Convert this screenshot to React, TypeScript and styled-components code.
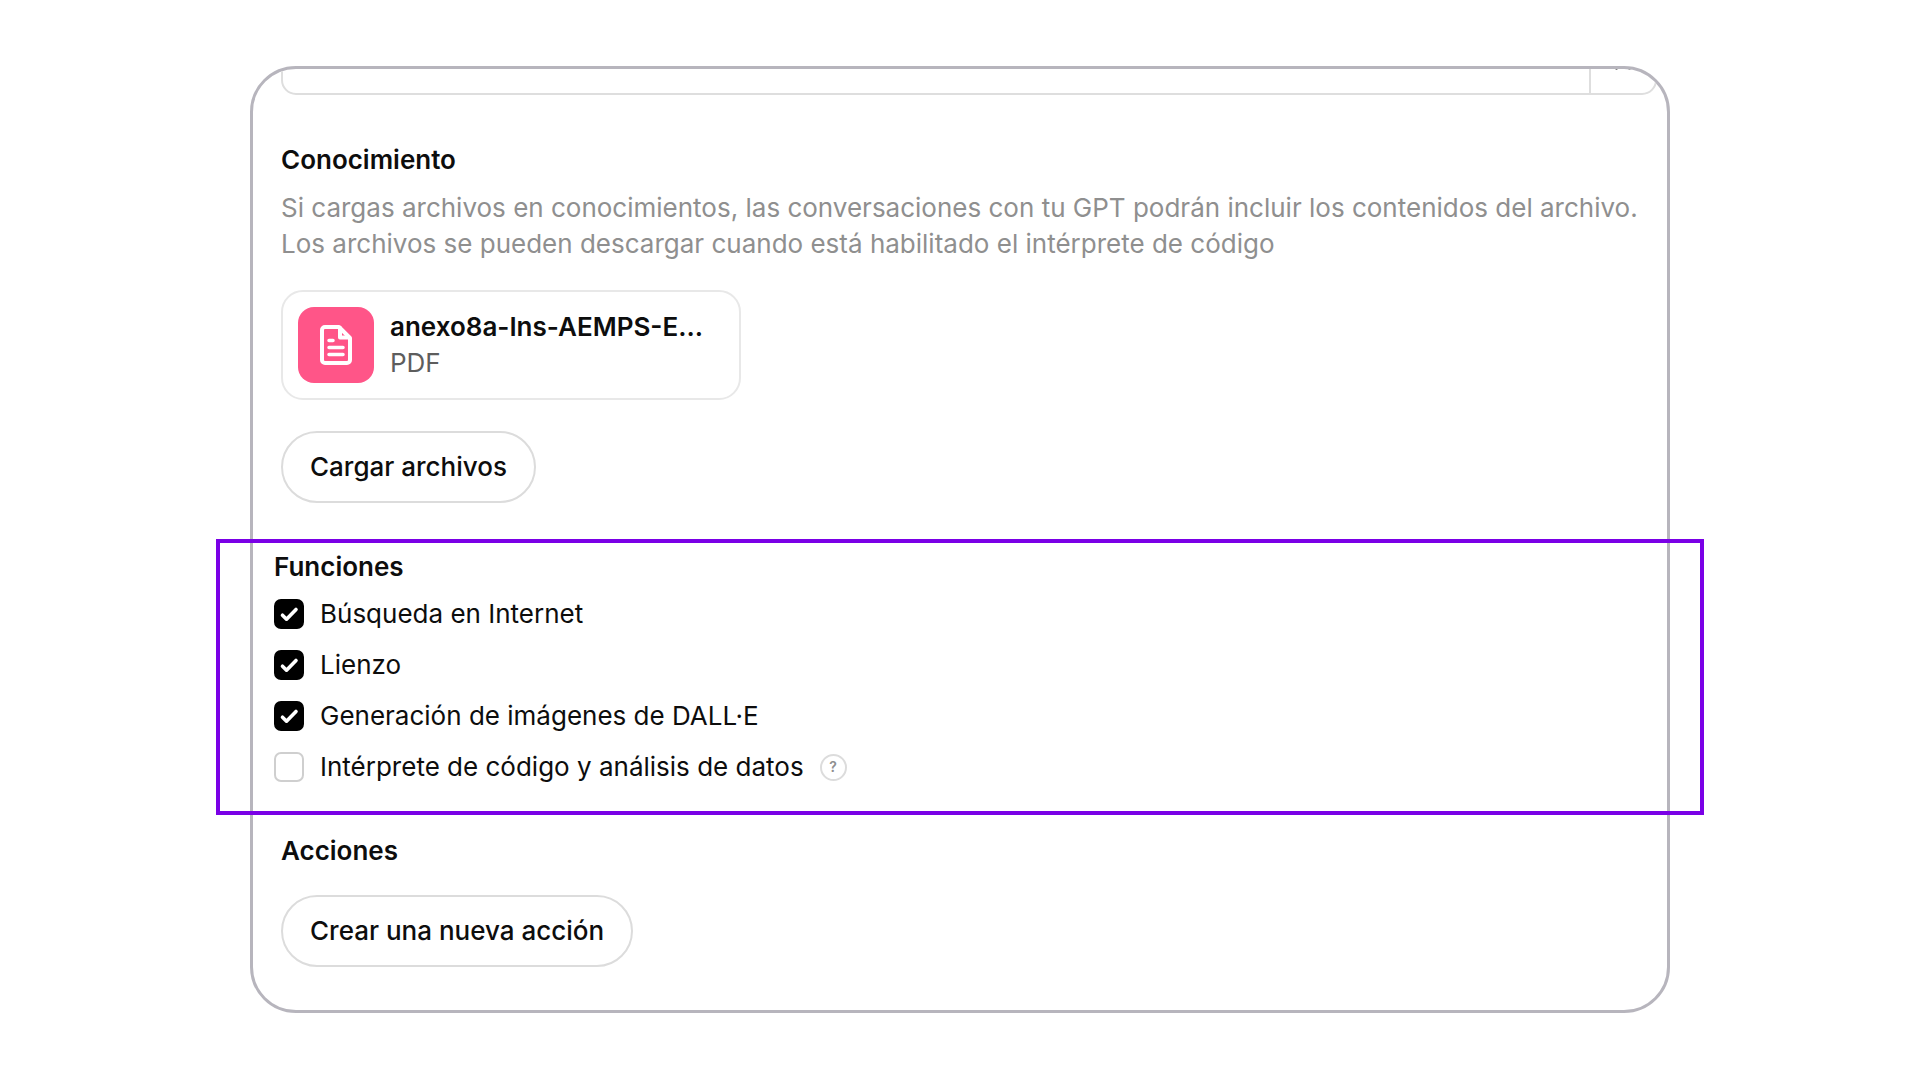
import React, { useState } from "react";
import styled, { createGlobalStyle } from "styled-components";

const GlobalStyle = createGlobalStyle`
  *, *::before, *::after { box-sizing: border-box; }
  body {
    margin: 0;
    background: #fff;
    color: #0d0d0d;
    font-family: Inter, "Liberation Sans", sans-serif;
    font-size: 26px;
    line-height: 36px;
  }
  h2, p { margin: 0; }
  button, input { font: inherit; color: inherit; }
`;

const Page = styled.div`
  padding: 66px 40px;
`;

const Panel = styled.main`
  max-width: 1420px;
  margin: 0 auto;
  border: 3px solid #b7b5bd;
  border-radius: 46px;
  background: #fff;
`;

const StarterStrip = styled.div`
  display: flex;
  align-items: flex-end;
  height: 60px;
  padding: 0 10px 34px 28px;
  border-radius: 43px 43px 0 0;
  overflow: hidden;
`;

const Starter = styled.div`
  display: flex;
  flex: 1;
  height: 66px;
  border: 2px solid #dedede;
  border-radius: 15px;
`;

const StarterInput = styled.input`
  flex: 1;
  min-width: 0;
  padding: 0 20px;
  border: 0;
  outline: 0;
  background: transparent;
`;

const RemoveButton = styled.button`
  display: flex;
  align-items: center;
  justify-content: center;
  width: 66px;
  padding: 0;
  border: 0;
  border-left: 2px solid #dedede;
  background: transparent;
`;

const Section = styled.section<{ $top?: number; $bottom?: number }>`
  padding: ${(p) => p.$top ?? 0}px 28px ${(p) => p.$bottom ?? 0}px;
`;

const Highlighted = styled(Section)`
  margin: 0 -37px;
  padding: 6px 54px 26px;
  border: 4px solid #7a00e6;
`;

const Title = styled.h2`
  font-size: 26px;
  font-weight: 600;
  line-height: 36px;
`;

const Description = styled.p`
  margin-top: 12px;
  color: #8f8f8f;
`;

const FileCard = styled.div`
  display: flex;
  align-items: center;
  gap: 16px;
  width: 460px;
  max-width: 100%;
  height: 110px;
  margin-top: 28px;
  padding: 0 15px;
  border: 2px solid #e8e8e8;
  border-radius: 22px;
`;

const FileBadge = styled.div`
  display: flex;
  flex: none;
  align-items: center;
  justify-content: center;
  width: 76px;
  height: 76px;
  border-radius: 16px;
  background: #ff5588;
`;

const FileText = styled.div`
  min-width: 0;
`;

const FileName = styled.div`
  overflow: hidden;
  font-weight: 600;
  white-space: nowrap;
`;

const FileType = styled.div`
  color: #5d5d5d;
`;

const PillButton = styled.button<{ $top: number }>`
  display: block;
  height: 72px;
  margin-top: ${(p) => p.$top}px;
  padding: 0 27px;
  border: 2px solid #dcdcdc;
  border-radius: 36px;
  background: #fff;
  font-weight: 500;
`;

const Options = styled.div`
  display: grid;
  gap: 15px;
  margin-top: 11px;
`;

const OptionRow = styled.div`
  display: flex;
  align-items: center;
  gap: 16px;
`;

const Option = styled.label`
  display: flex;
  align-items: center;
  gap: 16px;
  color: #0d0d0d;
`;

const Box = styled.span`
  display: grid;
  flex: none;
  width: 30px;
  height: 30px;
  & > * { grid-area: 1 / 1; }
`;

const Check = styled.input`
  appearance: none;
  width: 30px;
  height: 30px;
  margin: 0;
  border: 2px solid #cfcfcf;
  border-radius: 7px;
  background: #fff;
  &:checked { border-color: #000; background: #000; }
  & + svg { visibility: hidden; pointer-events: none; }
  &:checked + svg { visibility: visible; }
`;

const HelpButton = styled.button`
  display: flex;
  align-items: center;
  justify-content: center;
  width: 27px;
  height: 27px;
  padding: 0;
  border: 2px solid #dcdcdc;
  border-radius: 50%;
  background: #fff;
  color: #8f8f8f;
  font-size: 14px;
  font-weight: 600;
  line-height: 16px;
`;

const DocumentIcon = () => (
  <svg width="32" height="40" viewBox="0 0 32 40" fill="none" stroke="#fff" strokeWidth="4" strokeLinejoin="round" strokeLinecap="round" aria-hidden="true">
    <path d="M19 2H5a3 3 0 0 0-3 3v30a3 3 0 0 0 3 3h22a3 3 0 0 0 3-3V13z" />
    <path d="M20 3v9.500h9" />
    <path d="M9 15.500h4M9 22.500h14M9 29.500h14" strokeWidth="3.500" />
  </svg>
);

const CheckIcon = () => (
  <svg width="30" height="30" viewBox="0 0 30 30" fill="none" stroke="#fff" strokeWidth="3.600" strokeLinecap="round" strokeLinejoin="round" aria-hidden="true">
    <path d="M8.500 16.200l4 4L22 10.500" />
  </svg>
);

const CloseIcon = () => (
  <svg width="16" height="16" viewBox="0 0 16 16" stroke="#5d5d5d" strokeWidth="2.500" strokeLinecap="round" aria-hidden="true">
    <path d="M1.500 1.500l13 13M14.500 1.500l-13 13" />
  </svg>
);

const initialOptions = [
  { id: "web", label: "Búsqueda en Internet", on: true },
  { id: "canvas", label: "Lienzo", on: true },
  { id: "images", label: "Generación de imágenes de DALL·E", on: true },
  { id: "code", label: "Intérprete de código y análisis de datos", on: false, help: true },
];

export default function App() {
  const [options, setOptions] = useState(initialOptions);
  const toggle = (id: string) =>
    setOptions((list) => list.map((o) => (o.id === id ? { ...o, on: !o.on } : o)));

  return (
    <>
      <GlobalStyle />
      <Page>
        <Panel>
          <StarterStrip>
            <Starter>
              <StarterInput type="text" />
              <RemoveButton type="button">
                <CloseIcon />
              </RemoveButton>
            </Starter>
          </StarterStrip>

          <Section $top={13} $bottom={36}>
            <Title>Conocimiento</Title>
            <Description>
              Si cargas archivos en conocimientos, las conversaciones con tu GPT podrán incluir los
              contenidos del archivo. Los archivos se pueden descargar cuando está habilitado el
              intérprete de código
            </Description>
            <FileCard>
              <FileBadge>
                <DocumentIcon />
              </FileBadge>
              <FileText>
                <FileName>anexo8a-Ins-AEMPS-E...</FileName>
                <FileType>PDF</FileType>
              </FileText>
            </FileCard>
            <PillButton type="button" $top={31}>Cargar archivos</PillButton>
          </Section>

          <Highlighted>
            <Title>Funciones</Title>
            <Options>
              {options.map((o) => (
                <OptionRow key={o.id}>
                  <Option htmlFor={o.id}>
                    <Box>
                      <Check type="checkbox" id={o.id} checked={o.on} onChange={() => toggle(o.id)} />
                      <CheckIcon />
                    </Box>
                    {o.label}
                  </Option>
                  {o.help && <HelpButton type="button">?</HelpButton>}
                </OptionRow>
              ))}
            </Options>
          </Highlighted>

          <Section $top={18} $bottom={43}>
            <Title>Acciones</Title>
            <PillButton type="button" $top={26}>Crear una nueva acción</PillButton>
          </Section>
        </Panel>
      </Page>
    </>
  );
}
